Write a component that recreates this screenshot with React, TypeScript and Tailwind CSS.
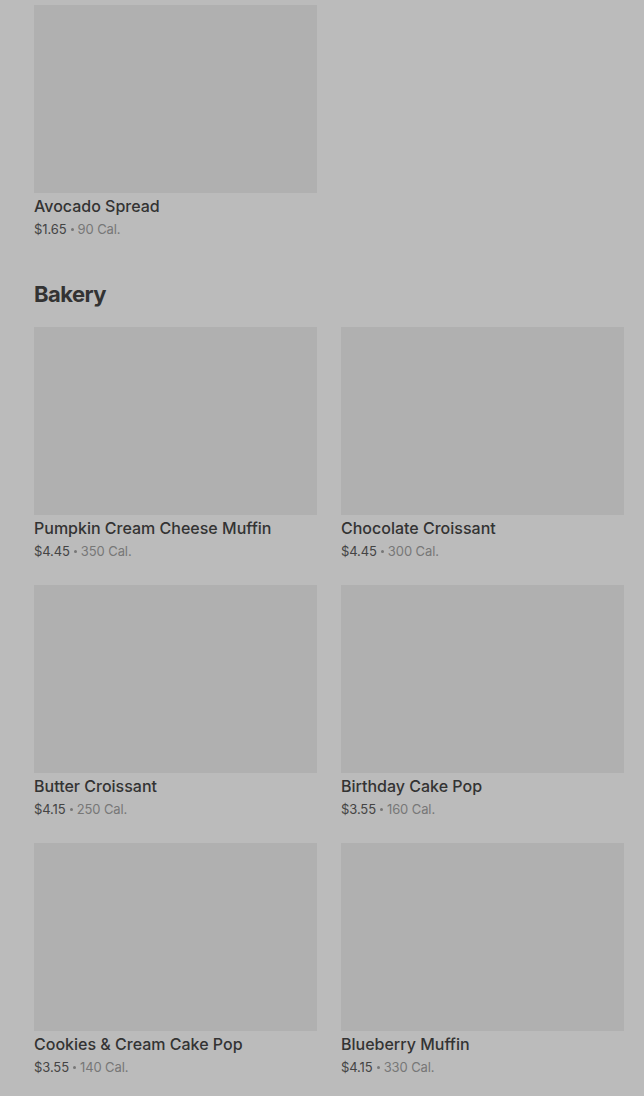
import React from 'react';

type Item = { name: string; price: string; cal: string };

const bakery: Item[] = [
  { name: 'Pumpkin Cream Cheese Muffin', price: '$4.45', cal: '350 Cal.' },
  { name: 'Chocolate Croissant', price: '$4.45', cal: '300 Cal.' },
  { name: 'Butter Croissant', price: '$4.15', cal: '250 Cal.' },
  { name: 'Birthday Cake Pop', price: '$3.55', cal: '160 Cal.' },
  { name: 'Cookies & Cream Cake Pop', price: '$3.55', cal: '140 Cal.' },
  { name: 'Blueberry Muffin', price: '$4.15', cal: '330 Cal.' },
];

function MenuCard({ item }: { item: Item }) {
  return (
    <div className="flex flex-col">
      <div className="h-[188px] w-full bg-[#b0b0b0]" />
      <div className="mt-[3px] text-[16px] leading-5 font-medium text-[#333333]">{item.name}</div>
      <div className="mt-[4px] flex h-[18px] items-center text-[13px] leading-[18px] tracking-[-0.1px] text-[#777777]">
        <span className="text-[#444444]">{item.price}</span>
        <span className="mx-[4px] h-[3px] w-[3px] rounded-full bg-[#777777]" />
        <span>{item.cal}</span>
      </div>
    </div>
  );
}

export default function App() {
  return (
    <div
      className="min-h-[1096px] w-full bg-[#bbbbbb] pl-[34px] pr-[20px] pt-[5px]"
      style={{ fontFamily: 'Inter, "Noto Sans", sans-serif' }}
    >
      <div className="grid grid-cols-2 gap-x-6">
        <MenuCard item={{ name: 'Avocado Spread', price: '$1.65', cal: '90 Cal.' }} />
      </div>

      <h2 className="mt-[42px] mb-[19px] text-[22px] leading-7 font-bold tracking-tight text-[#333333]">
        Bakery
      </h2>

      <div className="grid grid-cols-2 gap-x-6 gap-y-[25px]">
        {bakery.map((item) => (
          <MenuCard key={item.name} item={item} />
        ))}
      </div>
    </div>
  );
}
